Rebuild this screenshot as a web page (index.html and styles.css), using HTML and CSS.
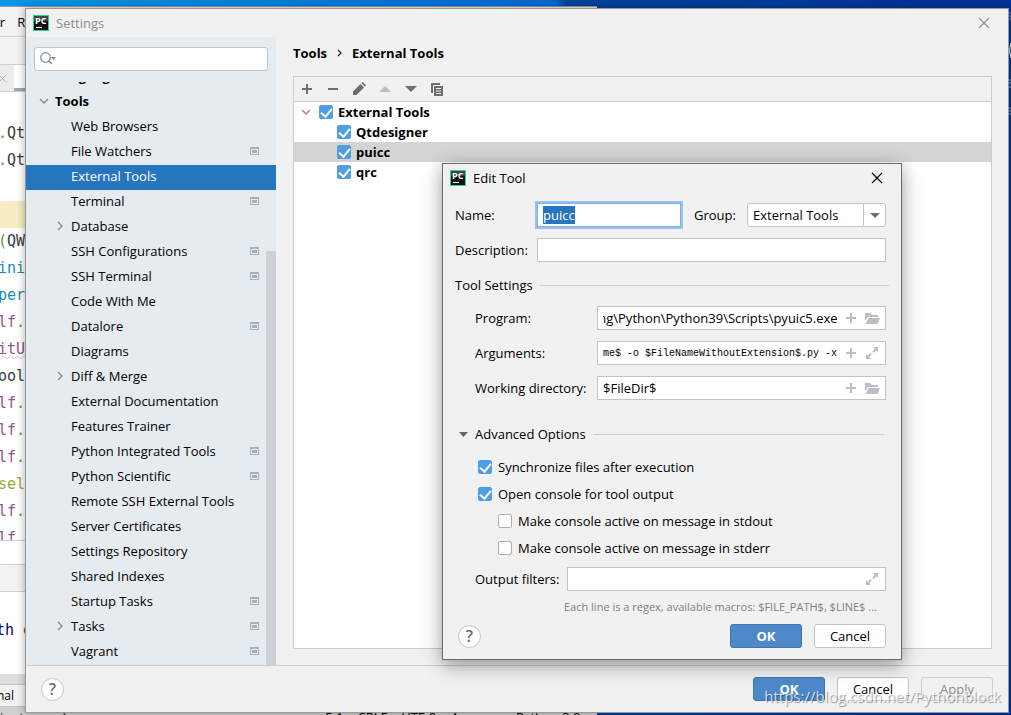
FILE: index.html
```html
<!DOCTYPE html>
<html lang="en">
<head>
    <meta charset="UTF-8">
    <meta name="viewport" content="width=device-width, initial-scale=1.0">
    <title>Settings</title>
    <link rel="stylesheet" href="styles.css">
</head>
<body>
    <!-- shared icons -->
    <svg class="sprite" aria-hidden="true">
        <symbol id="logo" viewBox="0 0 16 16">
            <rect width="16" height="16" fill="#21d789"/>
            <rect x="1" y="1" width="14" height="14" fill="#111"/>
            <rect x="1" y="1" width="14" height="5" fill="#444"/>
            <text x="2" y="9" class="logo-text">PC</text>
            <rect x="3" y="12" width="6" height="1" fill="#fff"/>
        </symbol>
        <symbol id="close" viewBox="0 0 12 12"><path d="M1 1l10 10M11 1L1 11" fill="none" stroke="currentColor" stroke-width="1.1"/></symbol>
        <symbol id="down" viewBox="0 0 10 10"><path d="M1 3l4 4 4-4" fill="none" stroke="#8a8a8a" stroke-width="1.300"/></symbol>
        <symbol id="right" viewBox="0 0 10 10"><path d="M3 1l4 4-4 4" fill="none" stroke="#8a8a8a" stroke-width="1.300"/></symbol>
        <symbol id="project" viewBox="0 0 9 8"><path d="M0 0h9v8H0zM1 2v5h7V2z" fill="#a5b1ba" fill-rule="evenodd"/><path d="M2 3h5v3H2z" fill="#a5b1ba"/></symbol>
        <symbol id="plus" viewBox="0 0 10 10"><path d="M4 0h2v4h4v2H6v4H4V6H0V4h4z" fill="currentColor"/></symbol>
        <symbol id="folder" viewBox="0 0 16 12"><path d="M1 9V1h5l2 2h6v2H4z" fill="#b9bfc4"/><path d="M4.500 6H16l-2.500 6H1.500z" fill="#b9bfc4"/></symbol>
        <symbol id="expand" viewBox="0 0 12 12"><path d="M7 0h5v5l-1.700-1.700-2.600 2.600-1.400-1.400 2.500-2.600zM5 12H0V7l1.700 1.700 2.600-2.600 1.400 1.400-2.500 2.600z" fill="#b9bfc4"/></symbol>
    </svg>

    <div class="ide">
        <div class="ide-menu"><span>or</span><span>R</span></div>
        <div class="ide-toolbar"></div>
        <div class="ide-tabs"><svg width="9" height="9"><use href="#close"/></svg><i></i></div>
        <pre class="code"><span><b>.</b>Qt</span>
<span><b>.</b>Qt</span>
<span> </span>
<span class="current"> </span>
<span><b>(</b>QW</span>
<span class="fn">ini</span>
<span class="fn">per</span>
<span class="self">lf<b>.</b></span>
<span class="self wavy">itU</span>
<span>ool</span>
<span class="self">lf<b>.</b></span>
<span class="self">lf<b>.</b></span>
<span class="self">lf<b>.</b></span>
<span class="arg">sel</span>
<span class="self">lf<b>.</b></span>
<span class="self">lf<b>.</b></span></pre>
        <div class="ide-crumbs"></div>
        <div class="ide-head"></div>
        <div class="ide-console">th <em>e</em></div>
        <div class="ide-scroll"></div>
        <div class="ide-tools">nal</div>
        <div class="ide-status"><span>inutes ago)</span><span class="ide-info"><span>5:1</span><span>CRLF</span><span>UTF-8</span><span>4 spaces</span><span>Python 3.9</span></span></div>
    </div>

    <svg class="desktop-icons" width="3" height="130" aria-hidden="true">
        <path d="M0 4h3M0 7h3M0 10h3M1 71h2M0 74h3M0 78h3M0 99h3M0 102h3M0 105h3" stroke="#8fa9dc"/>
        <path d="M3 34Q0 41 3 49" stroke="#fff" fill="none"/>
    </svg>

    <main class="window settings">
        <header class="title-bar">
            <svg width="16" height="16"><use href="#logo"/></svg>
            <span>Settings</span>
            <button class="close" type="button" aria-label="Close"><svg width="12" height="12"><use href="#close"/></svg></button>
        </header>

        <div class="settings-body">
            <aside class="sidebar">
                <div class="search">
                    <svg width="17" height="14" viewBox="0 0 17 14"><circle cx="5.500" cy="5.500" r="4.800" fill="none" stroke="#7f8b91" stroke-width="1.200"/><path d="M9 9l3 3" stroke="#7f8b91" stroke-width="1.400"/><path d="M11 5h5l-2.500 3z" fill="#7f8b91"/></svg>
                    <input type="text" aria-label="Search settings">
                </div>
                <nav class="tree">
                    <a class="top" href="#"><i></i>Languages &amp; Frameworks</a>
                    <a class="top" href="#"><svg width="10" height="10"><use href="#down"/></svg>Tools</a>
                    <a href="#"><i></i>Web Browsers</a>
                    <a href="#"><i></i>File Watchers<svg class="project" width="9" height="8"><use href="#project"/></svg></a>
                    <a class="selected" href="#"><i></i>External Tools</a>
                    <a href="#"><i></i>Terminal<svg class="project" width="9" height="8"><use href="#project"/></svg></a>
                    <a href="#"><svg width="10" height="10"><use href="#right"/></svg>Database</a>
                    <a href="#"><i></i>SSH Configurations<svg class="project" width="9" height="8"><use href="#project"/></svg></a>
                    <a href="#"><i></i>SSH Terminal<svg class="project" width="9" height="8"><use href="#project"/></svg></a>
                    <a href="#"><i></i>Code With Me</a>
                    <a href="#"><i></i>Datalore<svg class="project" width="9" height="8"><use href="#project"/></svg></a>
                    <a href="#"><i></i>Diagrams</a>
                    <a href="#"><svg width="10" height="10"><use href="#right"/></svg>Diff &amp; Merge</a>
                    <a href="#"><i></i>External Documentation</a>
                    <a href="#"><i></i>Features Trainer</a>
                    <a href="#"><i></i>Python Integrated Tools<svg class="project" width="9" height="8"><use href="#project"/></svg></a>
                    <a href="#"><i></i>Python Scientific<svg class="project" width="9" height="8"><use href="#project"/></svg></a>
                    <a href="#"><i></i>Remote SSH External Tools</a>
                    <a href="#"><i></i>Server Certificates</a>
                    <a href="#"><i></i>Settings Repository</a>
                    <a href="#"><i></i>Shared Indexes</a>
                    <a href="#"><i></i>Startup Tasks<svg class="project" width="9" height="8"><use href="#project"/></svg></a>
                    <a href="#"><svg width="10" height="10"><use href="#right"/></svg>Tasks<svg class="project" width="9" height="8"><use href="#project"/></svg></a>
                    <a href="#"><i></i>Vagrant<svg class="project" width="9" height="8"><use href="#project"/></svg></a>
                </nav>
                <div class="scroll-thumb"></div>
            </aside>

            <section class="content">
                <h1 class="breadcrumb"><span>Tools</span><svg width="5" height="8" viewBox="0 0 5 8"><path d="M1 1l3 3-3 3" fill="none" stroke="#222" stroke-width="1.200"/></svg><span>External Tools</span></h1>
                <div class="panel">
                    <div class="toolbar">
                        <button type="button" aria-label="Add"><svg width="10" height="10"><use href="#plus"/></svg></button>
                        <button type="button" aria-label="Remove"><svg width="10" height="10"><path d="M0 4h10v2H0z" fill="currentColor"/></svg></button>
                        <button type="button" aria-label="Edit"><svg width="14" height="14" viewBox="0 0 14 14"><path d="M1 13v-3.500L8.500 2 12 5.500 4.500 13zM9.400 1.200L10.600 0 14 3.300l-1.200 1.200z" fill="currentColor"/></svg></button>
                        <button type="button" aria-label="Move up" disabled><svg width="12" height="6"><path d="M0 6l6-6 6 6z" fill="#bdbdbd"/></svg></button>
                        <button type="button" aria-label="Move down"><svg width="12" height="6"><path d="M0 0h12L6 6z" fill="currentColor"/></svg></button>
                        <button type="button" aria-label="Copy"><svg width="12" height="13" viewBox="0 0 12 13"><path d="M0 0h9v2H2v8H0z" fill="currentColor"/><path d="M3 3h9v10H3zM5 5v1h5V5zM5 7.500v1h5v-1zM5 10v1h5v-1z" fill="currentColor" fill-rule="evenodd"/></svg></button>
                    </div>
                    <div class="tools">
                        <div class="tool root"><svg width="10" height="10"><use href="#down"/></svg><label><input type="checkbox" checked>External Tools</label></div>
                        <div class="tool"><label><input type="checkbox" checked>Qtdesigner</label></div>
                        <div class="tool active"><label><input type="checkbox" checked>puicc</label></div>
                        <div class="tool"><label><input type="checkbox" checked>qrc</label></div>
                    </div>
                </div>
            </section>
        </div>

        <footer class="actions settings-actions">
            <button class="help" type="button">?</button>
            <button class="btn primary" type="button">OK</button>
            <button class="btn" type="button">Cancel</button>
            <button class="btn" type="button" disabled>Apply</button>
        </footer>
    </main>

    <form class="window dialog">
        <header class="title-bar">
            <svg width="16" height="16"><use href="#logo"/></svg>
            <span>Edit Tool</span>
            <button class="close" type="button" aria-label="Close"><svg width="12" height="12"><use href="#close"/></svg></button>
        </header>

        <div class="dialog-body">
            <div class="row">
                <label for="name">Name:</label>
                <div class="field focused"><input id="name" type="text" value="puicc"></div>
                <label class="group-label" for="group">Group:</label>
                <div class="select">
                    <select id="group"><option>External Tools</option></select>
                    <span class="arrow"></span>
                </div>
            </div>
            <div class="row">
                <label for="description">Description:</label>
                <div class="field"><input id="description" type="text"></div>
            </div>

            <h2 class="section">Tool Settings</h2>
            <div class="group">
                <div class="row">
                    <label for="program">Program:</label>
                    <div class="field">
                        <input id="program" type="text" value="ning\Python\Python39\Scripts\pyuic5.exe">
                        <svg width="10" height="10"><use href="#plus"/></svg>
                        <svg width="16" height="12"><use href="#folder"/></svg>
                    </div>
                </div>
                <div class="row">
                    <label for="arguments">Arguments:</label>
                    <div class="field">
                        <input id="arguments" class="mono" type="text" value="me$ -o $FileNameWithoutExtension$.py -x">
                        <svg width="10" height="10"><use href="#plus"/></svg>
                        <svg width="16" height="12"><use href="#expand"/></svg>
                    </div>
                </div>
                <div class="row">
                    <label for="directory">Working directory:</label>
                    <div class="field">
                        <input id="directory" type="text" value="$FileDir$">
                        <svg width="10" height="10"><use href="#plus"/></svg>
                        <svg width="16" height="12"><use href="#folder"/></svg>
                    </div>
                </div>
            </div>

            <h2 class="section advanced"><svg width="9" height="5"><path d="M0 0h9L4.500 5z" fill="#666"/></svg>Advanced Options</h2>
            <div class="checks">
                <label><input type="checkbox" checked>Synchronize files after execution</label>
                <label><input type="checkbox" checked>Open console for tool output</label>
                <label class="nested"><input type="checkbox">Make console active on message in stdout</label>
                <label class="nested"><input type="checkbox">Make console active on message in stderr</label>
            </div>
            <div class="row filters">
                <label for="filters">Output filters:</label>
                <div class="field">
                    <input id="filters" type="text">
                    <svg width="16" height="12"><use href="#expand"/></svg>
                </div>
            </div>
            <p class="hint">Each line is a regex, available macros: $FILE_PATH$, $LINE$ ...</p>
        </div>

        <footer class="actions">
            <button class="help" type="button">?</button>
            <button class="btn primary" type="button">OK</button>
            <button class="btn" type="button">Cancel</button>
        </footer>
    </form>

    <div class="watermark">https://blog.csdn.net/Pythonblock</div>

    <script>
        const nameInput = document.getElementById('name');
        const programInput = document.getElementById('program');

        // Long paths show their end, where the file name is
        programInput.scrollLeft = programInput.scrollWidth;

        nameInput.focus();
        nameInput.select();
    </script>
</body>
</html>
```

FILE: styles.css
```css
* {
    box-sizing: border-box;
}

html, body {
    height: 100%;
    margin: 0;
}

body {
    position: relative;
    overflow: hidden;
    font-family: "Open Sans", "Noto Sans", sans-serif;
    font-size: 13px;
    color: #000;
    background: linear-gradient(90deg, #0a96e8, #0068d0 55%, #00439b 56%, #00329a);
}

svg {
    display: block;
    flex: none;
}

input, select, button {
    font: inherit;
    color: inherit;
}

button {
    padding: 0;
    border: none;
    background: none;
}

.sprite {
    position: absolute;
    width: 0;
    height: 0;
}
.logo-text {
    font-size: 9px;
    font-weight: bold;
    fill: #fff;
}

/* Editor behind the dialogs */
.ide {
    position: absolute;
    top: 6px;
    left: 0;
    right: 41%;
    height: 724px;
    overflow: hidden;
    border-top: 1px solid #999;
    background: #fff;
}
.ide-menu {
    display: flex;
    gap: 12px;
    height: 29px;
    margin-left: -8px;
    align-items: center;
    background: #f2f2f2;
}
.ide-toolbar {
    height: 29px;
    border: solid #d1d1d1;
    border-width: 1px 0;
    background: #f2f2f2;
}
.ide-tabs {
    display: flex;
    align-items: center;
    gap: 7px;
    height: 27px;
    margin-left: -2px;
    border-bottom: 1px solid #d1d1d1;
    background: #ececec;
    color: #aaa;
}
.ide-tabs i {
    flex: 1;
    height: 26px;
    border-bottom: 3px solid #9ca7c0;
    background: #fff;
}
.code {
    height: 448px;
    margin: 0 0 0 -2px;
    padding-top: 28px;
    overflow: hidden;
    font: 15px/27px "DejaVu Sans Mono", monospace;
    color: #3b3b3b;
}
.code b {
    font-weight: normal;
    color: #4c9a52;
}
.code .current {
    display: inline-block;
    width: 100%;
    height: 27px;
    vertical-align: top;
    background: #f6edc5;
}
.code .fn {
    color: #2089b5;
}
.code .self {
    color: #94558d;
}
.code .wavy {
    text-decoration: underline wavy #ccc 1px;
}
.code .arg {
    color: #9aa83a;
}
.ide-crumbs {
    height: 24px;
    border-top: 1px solid #d1d1d1;
}
.ide-head {
    height: 28px;
    border: solid #d1d1d1;
    border-width: 1px 0;
    background: #f2f2f2;
}
.ide-console {
    height: 82px;
    margin-left: -4px;
    padding-top: 25px;
    font: 15px/27px "DejaVu Sans Mono", monospace;
    color: #000080;
}
.ide-console em {
    font-style: normal;
    color: #a03050;
}
.ide-scroll {
    height: 10px;
    background: #dedede;
}
.ide-tools {
    height: 23px;
    margin-left: -3px;
    border: solid #c4c4c4;
    border-width: 1px 0;
    font-size: 12px;
    line-height: 22px;
    background: #f2f2f2;
}
.ide-status {
    display: flex;
    justify-content: space-between;
    height: 24px;
    padding: 0 16px 0 0;
    line-height: 20px;
    background: #d0d0d0;
}
.ide-info {
    display: flex;
    gap: 14px;
}

.desktop-icons {
    position: absolute;
    top: 9px;
    right: 0;
}

/* Windows */
.window {
    position: absolute;
    display: flex;
    flex-direction: column;
    background: #f1f1f1;
}
.title-bar {
    display: flex;
    flex: none;
    align-items: center;
    gap: 7px;
    height: 28px;
    padding: 0 18px 0 7px;
}
.close {
    margin-left: auto;
}

.settings {
    inset: 8px 2px 2px 25px;
    border: 1px solid #999;
    box-shadow: 0 0 8px rgba(0, 0, 0, 0.35);
}
.settings > .title-bar {
    color: #8c8c8c;
}
.settings-body {
    display: flex;
    flex: 1;
    min-height: 0;
}

/* Sidebar */
.sidebar {
    position: relative;
    display: flex;
    flex: none;
    flex-direction: column;
    width: 250px;
    padding-top: 10px;
    background: #e6ebef;
}
.search {
    display: flex;
    flex: none;
    align-items: center;
    height: 24px;
    margin: 0 8px 11px;
    padding: 0 5px;
    border: 1px solid #c4c4c4;
    border-radius: 3px;
    background: #fff;
}
.search input {
    flex: 1;
    min-width: 0;
    border: none;
    outline: none;
    background: none;
}
.tree {
    flex: 1;
    overflow: hidden;
}
.tree a {
    display: flex;
    align-items: center;
    gap: 6px;
    height: 25px;
    padding: 0 17px 3px 29px;
    color: #000;
    text-decoration: none;
    white-space: nowrap;
}
.tree a:first-child {
    margin-top: -17px;
}
.tree .top {
    padding-left: 13px;
    font-weight: bold;
}
.tree i {
    width: 10px;
}
.tree .selected {
    color: #fff;
    background: #2675bf;
}
.tree .project {
    margin-left: auto;
}
.scroll-thumb {
    position: absolute;
    top: 34%;
    right: 0;
    bottom: 0;
    width: 10px;
    background: #cdd1d7;
}

/* Tools list */
.content {
    display: flex;
    flex: 1;
    flex-direction: column;
    padding: 6px 16px 16px 17px;
}
.breadcrumb {
    display: flex;
    align-items: center;
    gap: 10px;
    height: 20px;
    margin: 0 0 13px;
    font-size: 13px;
}
.panel {
    flex: 1;
    border: 1px solid #cdcdcd;
    background: #fff;
}
.toolbar {
    display: flex;
    height: 25px;
    border-bottom: 1px solid #cdcdcd;
    background: #f1f1f1;
}
.toolbar button {
    display: flex;
    align-items: center;
    justify-content: center;
    width: 26px;
    color: #6e6e6e;
}
.tool {
    display: flex;
    align-items: center;
    height: 20px;
    padding: 0 0 1px 43px;
    font-weight: bold;
}
.tool.root {
    gap: 8px;
    padding-left: 7px;
}
.tool.active {
    background: #d4d4d4;
}
.tool label, .checks label {
    display: flex;
    align-items: center;
    gap: 5px;
}

input[type="checkbox"] {
    appearance: none;
    display: flex;
    justify-content: center;
    width: 14px;
    height: 14px;
    margin: 0;
    border: 1px solid #b0b0b0;
    border-radius: 2px;
    background: #fff;
}
input[type="checkbox"]:checked {
    border-color: #4f9ee3;
    background: #4f9ee3;
}
input[type="checkbox"]:checked::before {
    content: "";
    width: 5px;
    height: 9px;
    border: solid #fff;
    border-width: 0 2px 2px 0;
    transform: rotate(40deg);
}

/* Footer buttons */
.actions {
    display: flex;
    flex: none;
    align-items: center;
    gap: 12px;
    padding: 0 15px;
}
.settings-actions {
    height: 47px;
    border-top: 1px solid #cdcdcd;
}
.help {
    width: 23px;
    height: 23px;
    margin-right: auto;
    border: 1px solid #c4c4c4;
    border-radius: 50%;
    font-size: 16px;
    font-weight: 600;
    line-height: 20px;
    color: #6e6e6e;
    background: #fff;
}
.btn {
    width: 72px;
    height: 24px;
    border: 1px solid #c4c4c4;
    border-radius: 3px;
    background: #fff;
}
.btn.primary {
    border-color: #3d75b0;
    font-weight: bold;
    color: #fff;
    background: #4d89c9;
}
.btn:disabled {
    border-color: #cfcfcf;
    color: #8c8c8c;
    background: none;
}

/* Edit tool dialog */
.dialog {
    top: 163px;
    left: 442px;
    width: 460px;
    border: 1px solid #6b6b6b;
    box-shadow: 0 5px 18px rgba(0, 0, 0, 0.4);
}
.dialog-body {
    padding: 11px 15px 0 12px;
}
.row {
    display: flex;
    align-items: center;
    height: 24px;
    margin-bottom: 11px;
}
.row > label {
    flex: none;
    width: 82px;
}
.row > .group-label {
    width: 53px;
    margin-left: 13px;
}
.field {
    display: flex;
    flex: 1;
    align-items: center;
    gap: 8px;
    min-width: 0;
    height: 24px;
    padding: 0 5px;
    border: 1px solid #c4c4c4;
    color: #b9bfc4;
    background: #fff;
}
.field input {
    flex: 1;
    min-width: 0;
    padding: 0;
    border: none;
    outline: none;
    color: #000;
    background: none;
}
.field .mono {
    font-family: "Liberation Mono", monospace;
    font-size: 10px;
}
.focused {
    border-color: #87afda;
    box-shadow: 0 0 0 2px #97c3f3;
}
.field input::selection {
    color: #fff;
    background: #2675bf;
}
.select {
    position: relative;
    width: 139px;
    height: 24px;
}
.select select {
    appearance: none;
    width: 100%;
    height: 100%;
    padding: 0 24px 0 5px;
    border: 1px solid #c4c4c4;
    border-radius: 3px;
    background: #fff;
}
.arrow {
    position: absolute;
    top: 1px;
    right: 1px;
    bottom: 1px;
    display: flex;
    align-items: center;
    justify-content: center;
    width: 22px;
    border-left: 1px solid #c4c4c4;
    pointer-events: none;
}
.arrow::before {
    content: "";
    border: solid transparent;
    border-width: 5px 5px 0;
    border-top-color: #6e6e6e;
}
.section {
    display: flex;
    align-items: center;
    gap: 7px;
    height: 20px;
    margin: 13px -3px 11px 0;
    font-size: 13px;
    font-weight: normal;
}
.section::after {
    content: "";
    flex: 1;
    height: 1px;
    background: #cdcdcd;
}
.group {
    padding-left: 20px;
}
.group .row > label {
    width: 122px;
}
.advanced {
    margin: 24px 2px 9px 4px;
}
.checks {
    padding-left: 23px;
}
.checks label {
    gap: 6px;
    height: 27px;
}
.checks .nested {
    padding-left: 20px;
}
.filters {
    margin: 6px 0;
    padding-left: 20px;
}
.filters > label {
    width: 92px;
}
.hint {
    margin: 0 0 7px 109px;
    font-size: 11px;
    line-height: 20px;
    color: #808080;
    white-space: nowrap;
}
.dialog .actions {
    height: 35px;
    padding-bottom: 11px;
}

.watermark {
    position: absolute;
    right: 10px;
    bottom: 8px;
    font-size: 15px;
    line-height: 22px;
    color: rgba(255, 255, 255, 0.75);
    text-shadow: 1px 1px 1px rgba(0, 0, 0, 0.4);
}
```
